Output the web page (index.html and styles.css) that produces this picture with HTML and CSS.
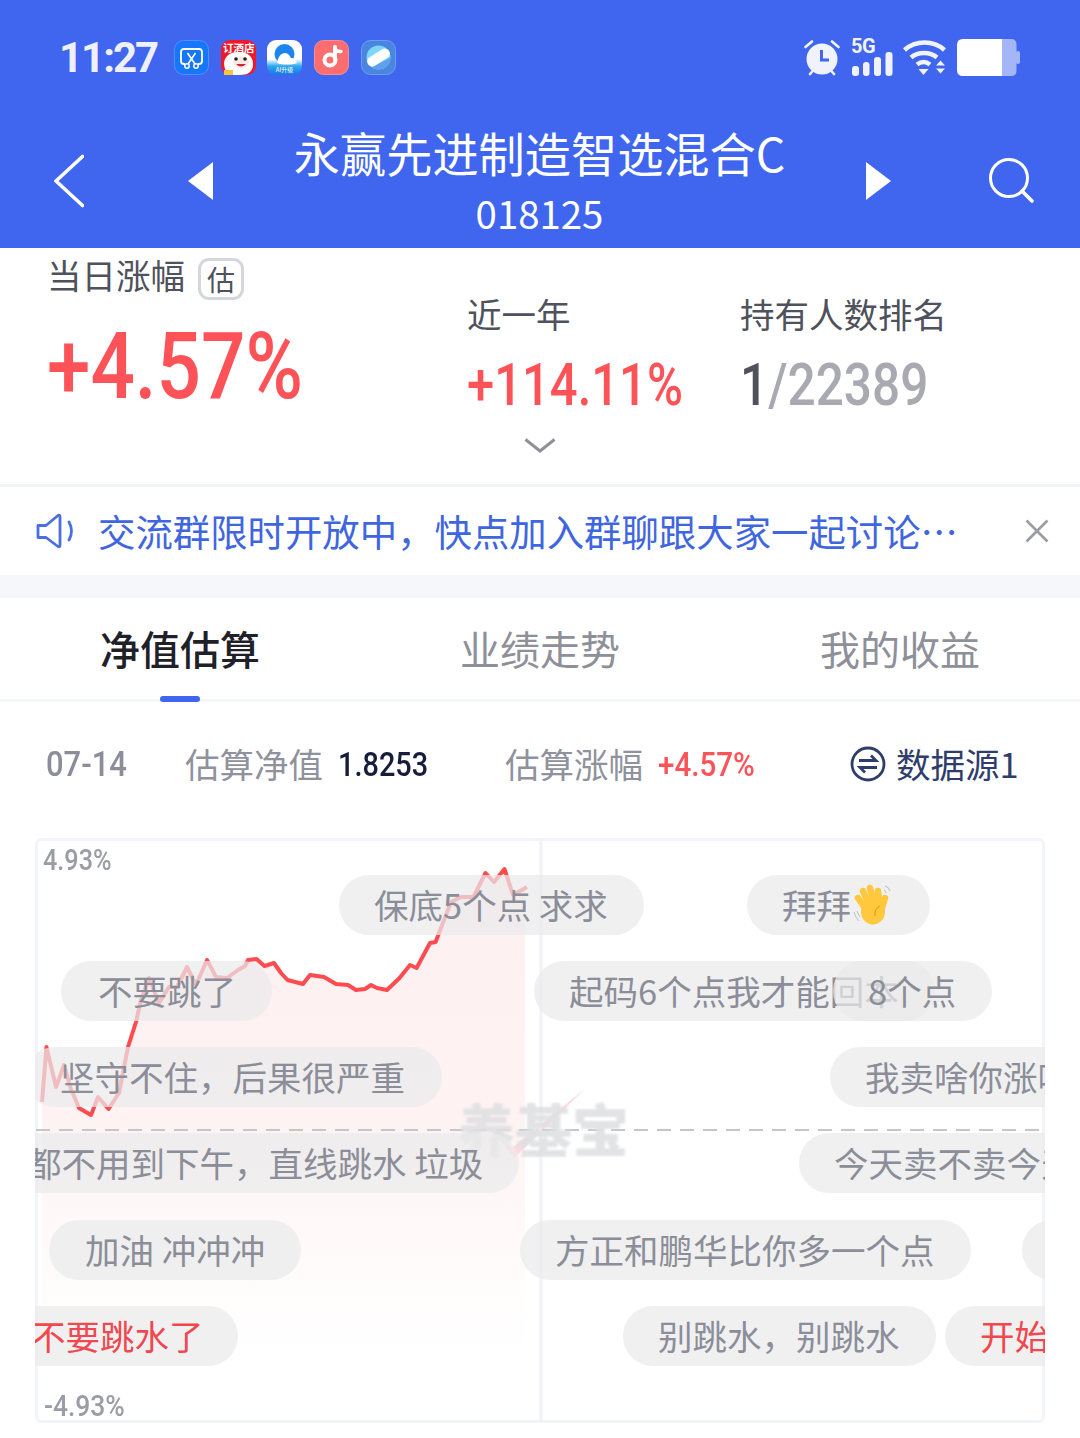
FILE: index.html
```html
<!DOCTYPE html>
<html lang="zh-CN">
<head>
<meta charset="utf-8">
<title>永赢先进制造智选混合C</title>
<link rel="stylesheet" href="styles.css">
</head>
<body>
<div class="page">
  <header class="top">
    <div class="status">
      <span class="time">11:27</span>
      <div class="apps">
        <svg class="app" viewBox="0 0 35 35"><rect x=".5" y=".5" width="34" height="34" rx="9" fill="#1677fb" stroke="#4d93f8"/><path d="M11 24H10a3 3 0 0 1-3-3V12a3 3 0 0 1 3-3h15a3 3 0 0 1 3 3v9a3 3 0 0 1-3 3h-1" fill="none" stroke="#fff" stroke-width="1.800"/><path d="M13.500 13l7.500 11M21.500 13l-7.500 11" stroke="#fff" stroke-width="1.600"/><circle cx="13" cy="26" r="2.200" fill="#1677fb" stroke="#fff" stroke-width="1.500"/><circle cx="22" cy="26" r="2.200" fill="#1677fb" stroke="#fff" stroke-width="1.500"/></svg>
        <svg class="app" viewBox="0 0 35 35"><rect width="35" height="35" rx="9" fill="#ee1a2a"/><text class="appword" x="2" y="12">订酒店</text><path d="M3 23c1-8 7-11 15-11s14 4 14 12-5 11-14 11H8c-3-3-5-7-5-12z" fill="#fff"/><ellipse cx="20" cy="22" rx="8" ry="6" fill="#fde9e4"/><circle cx="15" cy="19" r="1.800" fill="#222"/><circle cx="24" cy="19" r="1.800" fill="#222"/><path d="M15 24q5 5 10 0z" fill="#c92532"/><rect x="3" y="30" width="9" height="5" fill="#f9c33a"/></svg>
        <svg class="app" viewBox="0 0 35 35"><defs><linearGradient id="qb" x1="0" y1="0" x2="0" y2="1"><stop offset=".55" stop-color="#fff"/><stop offset=".75" stop-color="#2ea7ee"/><stop offset="1" stop-color="#1677e6"/></linearGradient></defs><rect width="35" height="35" rx="9" fill="url(#qb)"/><circle cx="17.500" cy="14" r="10" fill="#1c86ee"/><path d="M10 23c1-6 4-10 8-10 3 0 5 3 6 5 3 0 5 2 6 5-6 2-14 2-20 0z" fill="#fff"/><text class="appmini" x="17.500" y="32">AI升级</text></svg>
        <svg class="app" viewBox="0 0 35 35"><rect x=".5" y=".5" width="34" height="34" rx="9" fill="#fb6d6e" stroke="#fb8f90"/><path d="M21 7v12" stroke="#fff" stroke-width="4" stroke-linecap="round"/><path d="M21 8.500q1 3.500 6 3" fill="none" stroke="#fff" stroke-width="3.500" stroke-linecap="round"/><circle cx="16" cy="20" r="5.500" fill="none" stroke="#fff" stroke-width="4"/></svg>
        <svg class="app" viewBox="0 0 35 35"><rect x=".5" y=".5" width="34" height="34" rx="9" fill="#4a86e0" stroke="#6b9df0"/><circle cx="17.500" cy="17.500" r="12" fill="#7ed6fa"/><path d="M17.500 29.500a12 12 0 0 0 12-12l-19 10a12 12 0 0 0 7 2z" fill="#5f9fec"/><rect x="5" y="12.500" width="25" height="10" rx="5" transform="rotate(-32 17.500 17.500)" fill="#fff"/></svg>
      </div>
      <div class="sys">
        <svg class="alarm" viewBox="0 0 36 37"><circle cx="18" cy="20" r="15.500" fill="#f0f3fe"/><path d="M1.500 8L8 2.500M34.500 8L28 2.500M6 35l3.500-4M30 35l-3.500-4" stroke="#f0f3fe" stroke-width="2.600" stroke-linecap="round"/><path d="M17.500 11v10H25" fill="none" stroke="#4066ef" stroke-width="3"/></svg>
        <div class="net">
          <span class="fiveg">5G</span>
          <svg class="bars" viewBox="0 0 41 24"><rect x="0" y="14" width="7" height="10" rx="3"/><rect x="11" y="10" width="6.500" height="14" rx="3"/><rect x="22" y="5" width="7" height="19" rx="3"/><rect x="33.500" y="0" width="7" height="24" rx="3"/></svg>
        </div>
        <svg class="wifi" viewBox="0 0 45 37"><path d="M1.500 11c11-10 29-10 40 0" fill="none" stroke="#f0f3fe" stroke-width="4.500"/><path d="M8 18.500c7-6 19-6 26 0" fill="none" stroke="#f0f3fe" stroke-width="4.500"/><path d="M14 25.500c4-3 9-3 13 0" fill="none" stroke="#f0f3fe" stroke-width="4.500"/><path d="M15.500 30h10l-5 6z" fill="#f0f3fe"/><path d="M33 26.500h9l-4.500-5zM33 29.500h9l-4.500 5z" fill="#f0f3fe"/></svg>
        <svg class="battery" viewBox="0 0 63 37"><path d="M52 0h2q5.500 0 5.500 5.500v26q0 5.500-5.500 5.500H45V0z" fill="#a5b6f6"/><rect x="59" y="12" width="4" height="13" rx="2" fill="#a5b6f6"/><path d="M6 0h39v37H6q-6 0-6-6V6q0-6 6-6z" fill="#fff"/></svg>
      </div>
    </div>
    <div class="nav">
      <svg class="navback" viewBox="0 0 30 54"><path d="M28.500 2.500L2 27l26.500 24.500" fill="none" stroke="#fff" stroke-width="3.600" stroke-linecap="round"/></svg>
      <svg class="navarrow" viewBox="0 0 25 38"><path d="M25 0v38L0 19z" fill="#fff"/></svg>
      <div class="fund">
        <div class="fund-name">永赢先进制造智选混合C</div>
        <div class="fund-code">018125</div>
      </div>
      <svg class="navarrow" viewBox="0 0 25 38"><path d="M0 0v38l25-19z" fill="#fff"/></svg>
      <svg class="navsearch" viewBox="0 0 46 46"><circle cx="20" cy="20" r="18.500" fill="none" stroke="#fff" stroke-width="3"/><path d="M33 33l10 10" stroke="#fff" stroke-width="3.600" stroke-linecap="round"/></svg>
    </div>
  </header>

  <section class="stats">
    <div class="stat stat-main">
      <div class="label-row"><span class="label label-main">当日涨幅</span><span class="badge">估</span></div>
      <div class="num-big"><span class="din din-big">+4.57%</span></div>
    </div>
    <div class="stat">
      <div class="label">近一年</div>
      <div class="num"><span class="din din-num up">+114.11%</span></div>
    </div>
    <div class="stat">
      <div class="label">持有人数排名</div>
      <div class="num"><span class="din din-rank"><b class="rank-top">1</b><span class="rank-rest">/22389</span></span></div>
    </div>
    <svg class="more" viewBox="0 0 32 15"><path d="M1.500 1.500L16 13 30.500 1.500" fill="none" stroke="#8f9199" stroke-width="3"/></svg>
  </section>

  <section class="notice">
    <svg class="horn" viewBox="0 0 38 36"><path d="M2 12.500h8L22 2.500q2-1 2 1.500v28q0 2.500-2 1.500L10 24.500H2z" fill="none" stroke="#4a70e0" stroke-width="2.800" stroke-linejoin="round"/><path d="M33 9q5 9 0 18" fill="none" stroke="#4a70e0" stroke-width="2.800" stroke-linecap="round"/></svg>
    <div class="notice-text">交流群限时开放中，快点加入群聊跟大家一起讨论…</div>
    <svg class="close" viewBox="0 0 24 24"><path d="M1.500 1.500l21 21M22.500 1.500l-21 21" stroke="#9a9ca3" stroke-width="2.600"/></svg>
  </section>

  <nav class="tabs">
    <div class="tab tab-on">净值估算</div>
    <div class="tab">业绩走势</div>
    <div class="tab">我的收益</div>
  </nav>

  <section class="quote">
    <div class="q-date"><span class="din din-date">07-14</span></div>
    <div class="q-item"><span class="q-label">估算净值</span><span class="din din-q q-nav">1.8253</span></div>
    <div class="q-item"><span class="q-label">估算涨幅</span><span class="din din-q din-qup up">+4.57%</span></div>
    <div class="q-source">
      <svg class="swap" viewBox="0 0 36 36"><circle cx="18" cy="18" r="16" fill="none" stroke="#2f3d6b" stroke-width="2.800"/><path d="M9 14.500h17l-5-5M27 21.500H10l5 5" fill="none" stroke="#2f3d6b" stroke-width="2.800"/></svg>
      <span>数据源1</span>
    </div>
  </section>

  <section class="chart">
    <div class="canvas">
      <svg class="plot" viewBox="35 838 1010 585">
        <defs>
          <linearGradient id="area" x1="0" y1="0" x2="0" y2="1">
            <stop offset="0" stop-color="#fef0f0"/>
            <stop offset=".5" stop-color="#fef2f2"/>
            <stop offset=".75" stop-color="#fff9f9"/>
            <stop offset="1" stop-color="#ffffff"/>
          </linearGradient>
        </defs>
        <path d="M42 1102L46.500 1047 56 1087 64 1065 70.600 1088 79 1108 91 1115 98 1097 108.500 1109 119 1093 128 1047 136 1022 141 1000 149 978 159 1003 169 987 177 987 187 967 196 985 207 960 216 977 227 978 238 970 245 966 248 960 256.500 959 264.500 966 274 963 281 973 287.500 980 303 984 310 975 324 977 336 984 348 985 356 990 365 989 371 985 377 988 387 990 399.500 978 410 965 416.600 968 430 943 435.600 942 444 920 451 902 461 897 473.500 897 485.500 873 494 882 504.500 869 513 895 525 888V1350H42z" fill="url(#area)"/>
        <path class="check" d="M488 1126l24 22 74-60-72 70z"/>
        <path class="midline" d="M541 838V1423"/>
        <path class="zero" d="M36 1130H1040"/>
        <path class="line" d="M42 1102L46.500 1047 56 1087 64 1065 70.600 1088 79 1108 91 1115 98 1097 108.500 1109 119 1093 128 1047 136 1022 141 1000 149 978 159 1003 169 987 177 987 187 967 196 985 207 960 216 977 227 978 238 970 245 966 248 960 256.500 959 264.500 966 274 963 281 973 287.500 980 303 984 310 975 324 977 336 984 348 985 356 990 365 989 371 985 377 988 387 990 399.500 978 410 965 416.600 968 430 943 435.600 942 444 920 451 902 461 897 473.500 897 485.500 873 494 882 504.500 869 513 895 527 887"/>
      </svg>
      <div class="watermark">养基宝</div>
      <span class="axis axis-top">4.93%</span>
      <span class="axis axis-bottom">-4.93%</span>

      <div class="pill p1">保底5个点 求求</div>
      <div class="pill p2">拜拜<svg class="wave" viewBox="0 0 40 42"><path d="M2 28q1 5 5 9M5 27q1 3 3 6M33 2q4 1 5 5M32 6q2 1 2 3" fill="none" stroke="#b9c0c6" stroke-width="1"/><g stroke="#ffc83d" stroke-width="6.500" stroke-linecap="round"><path d="M13 24L6 14M17 21L11 7M22 19L18 4M27 19l-1-12M29 27l4-13"/></g><ellipse cx="21" cy="28" rx="12" ry="12.500" fill="#ffc83d"/><path d="M28 22q-6 3-5 10" fill="none" stroke="#e59600" stroke-width="1"/></svg></div>
      <div class="pill p3">不要跳了</div>
      <div class="pill p4">起码6个点我才能回本</div>
      <div class="pill p5">8个点</div>
      <div class="pill p6">坚守不住，后果很严重</div>
      <div class="pill p7">我卖啥你涨啥</div>
      <div class="pill p8">都不用到下午，直线跳水 垃圾</div>
      <div class="pill p9">今天卖不卖今天</div>
      <div class="pill p10">加油 冲冲冲</div>
      <div class="pill p11">方正和鹏华比你多一个点</div>
      <div class="pill p12">回本吧</div>
      <div class="pill p13 mine">不要跳水了</div>
      <div class="pill p14">别跳水，别跳水</div>
      <div class="pill p15 mine">开始跳水了</div>
    </div>
  </section>
</div>
</body>
</html>
```
FILE: styles.css
```css
* { box-sizing: border-box; }
html, body { margin: 0; padding: 0; background: #fff; }
body { font-family: "Noto Sans CJK SC", "Noto Sans", sans-serif; }
.page { width: 1080px; height: 1438px; overflow: hidden; }
svg { display: block; }

/* header */
.top { height: 248px; background: #4066ef; color: #fff; }
.status { height: 114px; display: flex; align-items: center; padding: 0 60px 0 59px; }
.time { font-family: Roboto, sans-serif; font-weight: 700; font-size: 42px; letter-spacing: -2px; color: #eef1fd; width: 115px; }
.apps { display: flex; gap: 11.7px; }
.app { width: 35px; height: 35px; }
.appword { font-size: 10.5px; font-weight: 700; fill: #fff; }
.appmini { font-size: 6px; fill: #fff; text-anchor: middle; }
.sys { margin-left: auto; display: flex; align-items: center; }
.alarm { width: 36px; height: 37px; }
.net { width: 42px; height: 37px; margin-left: 11px; position: relative; display: flex; flex-direction: column; justify-content: flex-end; }
.fiveg { position: absolute; left: 0; top: -4px; font-family: Roboto, sans-serif; font-weight: 700; font-size: 20px; line-height: 22px; letter-spacing: -.5px; color: #f0f3fe; }
.bars { width: 41px; height: 24px; margin-left: 1px; fill: #f0f3fe; }
.wifi { width: 45px; height: 37px; margin-left: 10px; }
.battery { width: 63px; height: 37px; margin-left: 9px; }

.nav { height: 134px; display: grid; grid-template-columns: 134px 25px 653px 25px 98px 46px; align-items: center; padding-left: 54px; }
.navback { width: 30px; height: 54px; }
.navarrow { width: 25px; height: 38px; }
.navsearch { grid-column: 6; width: 46px; height: 46px; }
.fund { text-align: center; padding-top: 1px; }
.fund-name { font-size: 46.2px; line-height: 61px; }
.fund-code { font-size: 38.4px; line-height: 61px; }

/* number face */
.din { font-family: Roboto, sans-serif; font-weight: 500; display: inline-block; transform-origin: left center; white-space: nowrap; }
.up { color: #fd5257; }

/* stats */
.stats { height: 239px; border-bottom: 3px solid #f2f3f8; display: grid; grid-template-columns: 420px 273px 1fr; grid-template-rows: 190px 15px; padding-left: 47px; }
.stat { padding-top: 47px; }
.stat-main { padding-top: 10px; }
.label { font-size: 34.5px; line-height: 36px; color: #4f525c; display: block; }
.label-main { margin-bottom: 10px; }
.label-row { display: flex; align-items: center; height: 42px; }
.badge { margin-left: 13px; width: 46px; height: 42px; border: 3px solid #d4d6dc; border-radius: 11px; font-size: 28px; line-height: 36px; text-align: center; color: #4f525c; }
.num-big { margin-top: 21px; line-height: 92px; height: 92px; }
.din-big { font-size: 92px; line-height: 92px; color: #fd5257; transform: scaleX(.85); }
.num { margin-top: 24px; height: 59px; }
.din-num { font-size: 59px; line-height: 59px; transform: scaleX(.83); }
.din-rank { font-size: 59px; line-height: 59px; transform: scaleX(.84); }
.rank-top { font-weight: 500; color: #4f525c; }
.rank-rest { color: #a8a9b1; }
.more { grid-column: 1 / -1; grid-row: 2; width: 32px; height: 15px; justify-self: center; margin-left: -47px; }

/* notice */
.notice { height: 88px; display: flex; align-items: center; padding-left: 36px; }
.horn { width: 38px; height: 36px; }
.notice-text { margin-left: 24px; width: 927px; font-size: 37.4px; line-height: 50px; padding-bottom: 1px; color: #4066df; white-space: nowrap; }
.close { width: 24px; height: 24px; }

/* tabs */
.tabs { border-top: 23px solid #f6f7fb; height: 127px; border-bottom: 3px solid #f5f6f9; display: grid; grid-template-columns: repeat(3, 360px); }
.tab { text-align: center; font-size: 40px; line-height: 101px; height: 101px; color: #8e9099; position: relative; }
.tab-on { color: #1f2129; font-weight: 500; }
.tab-on::after { content: ""; position: absolute; left: 160px; bottom: -3px; width: 40px; height: 6px; border-radius: 3px; background: #4066ef; }

/* quote row */
.quote { height: 136px; padding: 0 0 12px 46px; display: grid; grid-template-columns: 139px 320px 345px auto; align-items: center; }
.din-date { font-size: 35px; color: #8b8e98; transform: scaleX(.885); }
.q-item { display: flex; align-items: center; }
.q-label { font-size: 34.5px; line-height: 38px; padding-bottom: 2px; color: #8f929c; width: 153px; flex: none; }
.din-q { font-size: 34px; transform: scaleX(.85); }
.din-qup { transform: scaleX(.87); }
.q-nav { color: #171c3b; }
.q-source { display: flex; align-items: center; font-size: 34.5px; line-height: 38px; color: #2f3d6b; margin-top: -2px; }
.swap { width: 36px; height: 36px; margin-right: 10px; margin-top: 2px; }

/* chart */
.chart { height: 585px; margin: 0 35px; border: 3px solid #f3f4f9; border-radius: 6px; position: relative; }
.canvas { position: absolute; left: -3px; top: -3px; width: 1010px; height: 585px; overflow: hidden; }
.plot { position: absolute; left: 0; top: 0; width: 1010px; height: 585px; }
.line { fill: none; stroke: #fd4c50; stroke-width: 4; stroke-linejoin: round; }
.midline { fill: none; stroke: #f1f2f8; stroke-width: 3; }
.zero { fill: none; stroke: #c5c6ca; stroke-width: 2; stroke-dasharray: 14 9; }
.check { fill: #fdd9dc; }
.watermark { position: absolute; left: 423px; top: 254px; font-size: 57px; line-height: 70px; font-weight: 900; color: #dfe0e2; opacity: .9; filter: blur(.8px); white-space: nowrap; }
.axis { position: absolute; font-family: Roboto, sans-serif; font-weight: 500; font-size: 30px; line-height: 30px; color: #9a9ca6; transform: scaleX(.84); transform-origin: left center; }
.axis-top { left: 8px; top: 7px; }
.axis-bottom { left: 9px; top: 553px; transform: scaleX(.88); }

.pill { position: absolute; height: 60px; padding: 0 36px 2px 35px; border-radius: 30px; background: rgba(234, 234, 235, .72); color: #8b8e98; font-size: 34.5px; line-height: 58px; white-space: nowrap; display: flex; align-items: center; }
.mine { color: #f0484e; }
.wave { width: 40px; height: 42px; margin-left: 1px; margin-right: 2px; margin-top: 2px; }
.p1 { left: 304px; top: 37px; }
.p2 { left: 712px; top: 37px; }
.p3 { left: 26px; top: 123px; padding-left: 37px; }
.p4 { left: 499px; top: 123px; }
.p5 { left: 798px; top: 123px; }
.p6 { left: -10px; top: 209px; padding-right: 37px; }
.p7 { left: 795px; top: 209px; }
.p8 { left: -43px; top: 295px; }
.p9 { left: 764px; top: 295px; }
.p10 { left: 14px; top: 382px; padding-left: 36px; }
.p11 { left: 485px; top: 382px; }
.p12 { left: 987px; top: 382px; }
.p13 { left: -39px; top: 468px; padding-right: 34px; }
.p14 { left: 588px; top: 468px; }
.p15 { left: 910px; top: 468px; }
```
